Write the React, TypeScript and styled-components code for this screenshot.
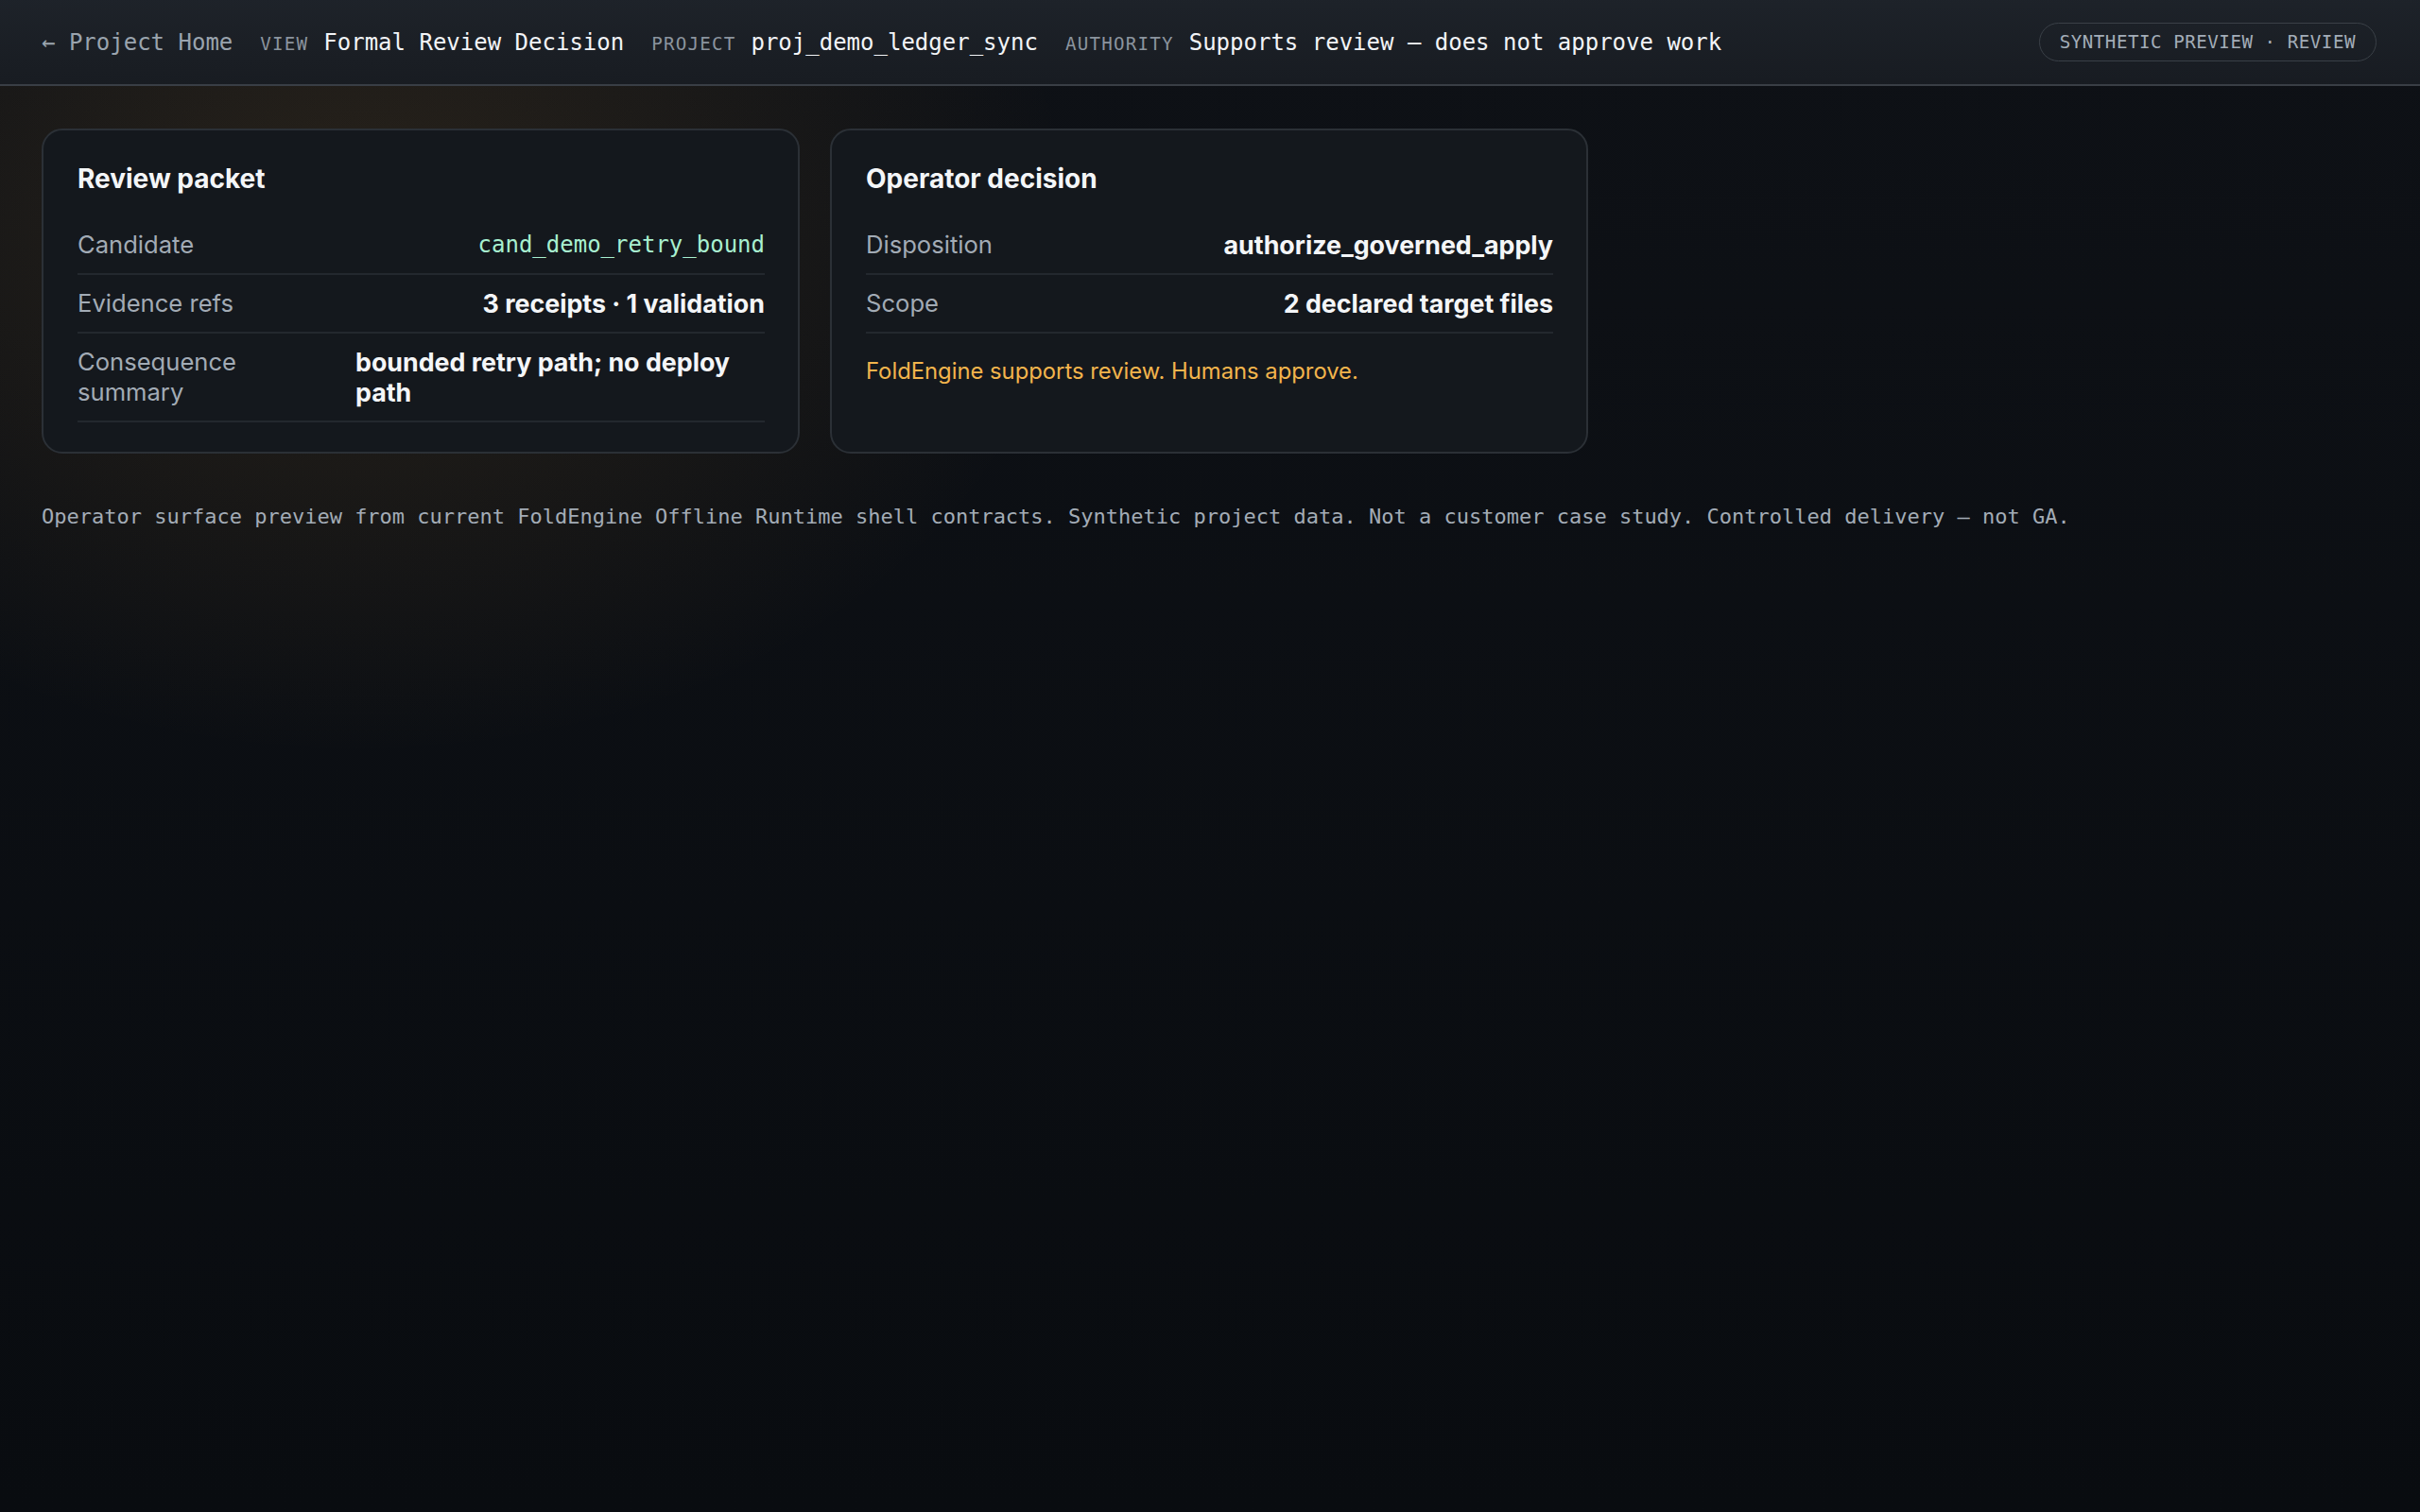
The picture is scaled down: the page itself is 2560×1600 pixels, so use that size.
import React from 'react'
import styled, { createGlobalStyle } from 'styled-components'

/** Types **/
type Row = {
  label: string
  value: string
  mono?: boolean
}

type Packet = {
  title: string
  rows: Row[]
  note?: string
}

/** Data **/
const packets: Packet[] = [
  {
    title: 'Review packet',
    rows: [
      { label: 'Candidate', value: 'cand_demo_retry_bound', mono: true },
      { label: 'Evidence refs', value: '3 receipts · 1 validation' },
      { label: 'Consequence summary', value: 'bounded retry path; no deploy path' },
    ],
  },
  {
    title: 'Operator decision',
    rows: [
      { label: 'Disposition', value: 'authorize_governed_apply' },
      { label: 'Scope', value: '2 declared target files' },
    ],
    note: 'FoldEngine supports review. Humans approve.',
  },
]

const crumbs = [
  { label: 'VIEW', value: 'Formal Review Decision' },
  { label: 'PROJECT', value: 'proj_demo_ledger_sync' },
  { label: 'AUTHORITY', value: 'Supports review — does not approve work' },
]

const mono = `"DejaVu Sans Mono", "Liberation Mono", monospace`
const sans = `Inter, "Noto Sans", sans-serif`

/** Global **/
const GlobalStyle = createGlobalStyle`
  html, body {
    margin: 0;
    min-height: 100%;
  }
  body {
    min-height: 1600px;
    background:
      radial-gradient(ellipse 760px 560px at 380px 240px, rgba(205, 145, 60, 0.14), transparent 100%),
      linear-gradient(180deg, #0e1116 0%, #090c10 100%);
    color: #eef1f4;
    font-family: ${sans};
  }
`

/** Header **/
const Header = styled.header`
  height: 91px;
  box-sizing: border-box;
  display: flex;
  align-items: center;
  justify-content: space-between;
  padding: 0 46px 0 44px;
  background: linear-gradient(180deg, rgba(30, 35, 42, 0.97) 0%, rgba(24, 28, 34, 0.97) 100%);
  border-bottom: 2px solid #393e45;
  font-family: ${mono};
`

const Trail = styled.nav`
  display: flex;
  align-items: center;
  gap: 29px;
`

const BackLink = styled.a`
  font-size: 24px;
  color: #9aa4ae;
  text-decoration: none;
`

const Crumb = styled.div`
  display: flex;
  align-items: baseline;
  gap: 16px;
`

const CrumbLabel = styled.span`
  font-size: 19.2px;
  letter-spacing: 1.2px;
  color: #8b949e;
`

const CrumbValue = styled.span`
  font-size: 24px;
  color: #f2f4f7;
`

const Pill = styled.span`
  display: inline-flex;
  align-items: center;
  height: 41px;
  box-sizing: border-box;
  padding: 0 21px;
  border: 1px solid #3a4047;
  border-radius: 999px;
  font-size: 19.2px;
  letter-spacing: 0.5px;
  color: #a3adb8;
`

/** Body **/
const Main = styled.main`
  padding: 45px 44px 0;
`

const Cards = styled.div`
  display: grid;
  grid-template-columns: 802px 802px;
  gap: 32px;
`

const Card = styled.section`
  box-sizing: border-box;
  padding: 30px 35px 31px 36px;
  background: #14181d;
  border: 2px solid #2b3036;
  border-radius: 22px;
`

const CardTitle = styled.h2`
  margin: 0 0 19px;
  font-size: 28px;
  line-height: 42px;
  font-weight: 700;
  color: #f4f6f8;
`

const RowBox = styled.div`
  display: grid;
  grid-template-columns: 270px 1fr;
  column-gap: 24px;
  align-items: start;
  padding: 14px 0;
  border-bottom: 2px solid #23282e;
`

const Label = styled.span`
  font-size: 25.6px;
  line-height: 32px;
  color: #a2abb5;
`

const Value = styled.span<{ $mono?: boolean }>`
  justify-self: end;
  text-align: left;
  font-family: ${({ $mono }) => ($mono ? mono : sans)};
  font-size: ${({ $mono }) => ($mono ? '24px' : '26.8px')};
  line-height: 32px;
  font-weight: ${({ $mono }) => ($mono ? 400 : 700)};
  color: ${({ $mono }) => ($mono ? '#a8f0d0' : '#f4f6f8')};
`

const Note = styled.p`
  margin: 24px 0 0;
  font-size: 23.8px;
  line-height: 32px;
  color: #f2b44c;
`

const Footnote = styled.p`
  margin: 53px 0 0;
  font-family: ${mono};
  font-size: 22px;
  line-height: 28px;
  color: #a3acb6;
`

/** Components **/
const PacketCard = ({ packet }: { packet: Packet }) => (
  <Card>
    <CardTitle>{packet.title}</CardTitle>
    {packet.rows.map((r) => (
      <RowBox key={r.label}>
        <Label>{r.label}</Label>
        <Value $mono={r.mono}>{r.value}</Value>
      </RowBox>
    ))}
    {packet.note && <Note>{packet.note}</Note>}
  </Card>
)

export default function App() {
  return (
    <>
      <GlobalStyle />
      <Header>
        <Trail>
          <BackLink href="#">← Project Home</BackLink>
          {crumbs.map((c) => (
            <Crumb key={c.label}>
              <CrumbLabel>{c.label}</CrumbLabel>
              <CrumbValue>{c.value}</CrumbValue>
            </Crumb>
          ))}
        </Trail>
        <Pill>SYNTHETIC PREVIEW · REVIEW</Pill>
      </Header>
      <Main>
        <Cards>
          {packets.map((p) => (
            <PacketCard key={p.title} packet={p} />
          ))}
        </Cards>
        <Footnote>
          Operator surface preview from current FoldEngine Offline Runtime shell contracts. Synthetic
          project data. Not a customer case study. Controlled delivery — not GA.
        </Footnote>
      </Main>
    </>
  )
}
